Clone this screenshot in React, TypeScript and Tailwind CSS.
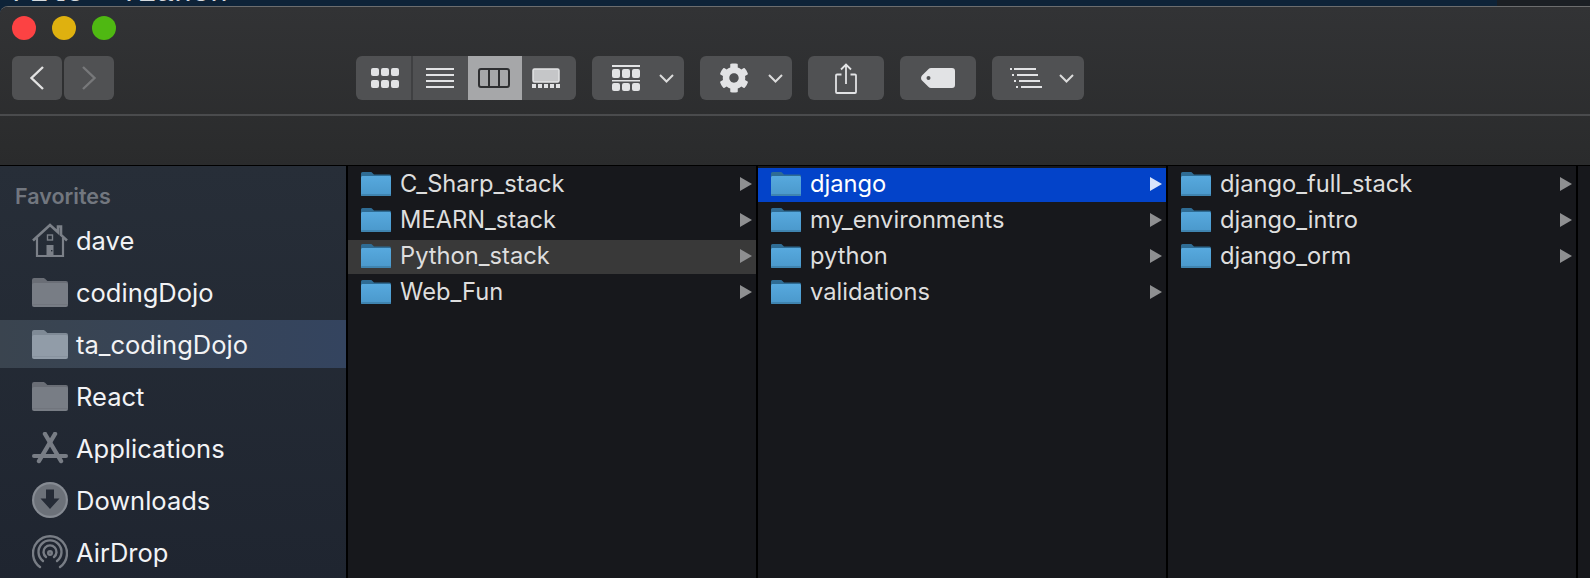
import React from "react";
import { FaCog } from "react-icons/fa";

const font = { fontFamily: "Inter, 'Noto Sans', sans-serif" };

function BlueFolder({ id }: { id: string }) {
  return (
    <svg width="30" height="24" viewBox="0 0 30 24" className="shrink-0">
      <defs>
        <linearGradient id={id} x1="0" y1="0" x2="0" y2="1">
          <stop offset="0" stopColor="#57a9de" />
          <stop offset="1" stopColor="#4a98cb" />
        </linearGradient>
      </defs>
      <path d="M1.5 0H9.5C10.5 0 11 .5 11.7 1.2L13 2.5H28.5A1.5 1.5 0 0 1 30 4V8H0V1.5A1.5 1.5 0 0 1 1.5 0Z" fill="#2f6c94" />
      <path d="M0 5.5C0 4.7.7 4 1.5 4H28.5C29.3 4 30 4.7 30 5.5V22.5A1.5 1.5 0 0 1 28.5 24H1.5A1.5 1.5 0 0 1 0 22.5Z" fill={`url(#${id})`} />
      <rect x="0" y="22" width="30" height="2" rx="1" fill="#3f84b0" />
    </svg>
  );
}

function GrayFolder({ color, dark }: { color: string; dark: string }) {
  return (
    <svg width="36" height="29" viewBox="0 0 36 29">
      <path d="M2 0H11C12.2 0 13 .6 13.8 1.4L15.4 3H34A2 2 0 0 1 36 5V10H0V2A2 2 0 0 1 2 0Z" fill={dark} />
      <path d="M0 7C0 5.9.9 5 2 5H34C35.1 5 36 5.9 36 7V27A2 2 0 0 1 34 29H2A2 2 0 0 1 0 27Z" fill={color} />
      <rect y="26" width="36" height="1" fill={dark} opacity="0.5" />
    </svg>
  );
}

function House() {
  return (
    <svg width="36" height="34" viewBox="0 0 36 34" fill="none">
      <path d="M1 17.5L18 2L26 9.3V3.5H29V12L35 17.5" stroke="#7b8088" strokeWidth="2.6" />
      <path d="M5 15V33H31V15" stroke="#7b8088" strokeWidth="2.2" />
      <rect x="15.5" y="12" width="5" height="5" stroke="#7b8088" strokeWidth="1.4" />
      <rect x="14.5" y="22" width="7" height="11" fill="#7b8088" />
      <rect x="19" y="27" width="1.4" height="1.4" fill="#262d38" />
    </svg>
  );
}

function AppsIcon() {
  return (
    <svg width="36" height="32" viewBox="0 0 36 32" fill="none" stroke="#787d85" strokeLinecap="round">
      <path d="M13 2L29 29" strokeWidth="4.4" />
      <path d="M23 2L7 29" strokeWidth="4.4" />
      <path d="M2 24H34" strokeWidth="4" />
    </svg>
  );
}

function DownloadIcon() {
  return (
    <svg width="36" height="36" viewBox="0 0 36 36">
      <circle cx="18" cy="18" r="18" fill="#868b93" />
      <circle cx="18" cy="18" r="15.8" fill="#6c7179" />
      <path d="M14 7.5H22V16.5H27.5L18 27L8.5 16.5H14Z" fill="#252b36" />
    </svg>
  );
}

function AirDropIcon() {
  return (
    <svg width="36" height="34" viewBox="0 0 36 34" fill="none" stroke="#787d85" strokeWidth="2.4" strokeLinecap="round">
      <path d="M8 32A17 17 0 1 1 28 32" />
      <path d="M11 26A11.5 11.5 0 1 1 25 26" />
      <path d="M14 22A6.5 6.5 0 1 1 22 22" />
      <circle cx="18" cy="18" r="1.8" />
    </svg>
  );
}

function Arrow({ selected }: { selected?: boolean }) {
  return (
    <svg width="12" height="14" viewBox="0 0 12 14" className="shrink-0">
      <path d="M0 0L12 7L0 14Z" fill={selected ? "#d9e4fb" : "#8e8f91"} />
    </svg>
  );
}

function Row({ label, id, selected, active }: { label: string; id: string; selected?: boolean; active?: boolean }) {
  const bg = selected ? "bg-[#0343c9] text-white" : active ? "bg-[#393939] text-[#dedede]" : "text-[#dedede]";
  return (
    <div className={`flex h-[34px] items-center pb-[2px] pl-[13px] pr-1 ${bg}`}>
      <BlueFolder id={id} />
      <span className="ml-[9px] flex-1 text-[23.7px] leading-none">{label}</span>
      <Arrow selected={selected} />
    </div>
  );
}

function Column({ children }: { children: React.ReactNode }) {
  return <div className="flex w-[408px] shrink-0 flex-col gap-[2px] bg-[#17181c] pt-[2px]">{children}</div>;
}

function SideRow({ icon, label, selected }: { icon: React.ReactNode; label: string; selected?: boolean }) {
  return (
    <div className={`flex h-12 items-center pl-8 ${selected ? "bg-gradient-to-r from-[#3a444f] to-[#34445f]" : ""}`}>
      <div className="flex w-9 shrink-0 justify-center">{icon}</div>
      <span className="ml-2 pt-[1px] text-[25.5px] leading-none text-[#f2f3f5]">{label}</span>
    </div>
  );
}

function Chevron() {
  return (
    <svg width="15" height="9" viewBox="0 0 15 9" fill="none" className="-ml-px">
      <path d="M1 1L7.5 7.5L14 1" stroke="#dcdcdc" strokeWidth="2" />
    </svg>
  );
}

const btn = "flex h-11 items-center rounded-md bg-[#505153]";

export default function App() {
  return (
    <div className="flex h-[578px] w-[1590px] flex-col overflow-hidden bg-[#0e2338]" style={font}>
      <div className="relative flex h-[6px] shrink-0 justify-between overflow-hidden">
        <div className="-mt-[24px] pl-3 text-[30px] leading-[34px] whitespace-pre text-[#d5dade]" style={{ fontFamily: "'Liberation Mono', monospace" }}>
          {"File 'Tianon==> >"}
        </div>
        <div className="w-[93px] bg-[#1b1f24]" />
      </div>
      <div className="flex flex-1 flex-col overflow-hidden rounded-tl-lg border-t border-[#6c6d6e] bg-[#17181c]">
        <div className="flex h-[158px] shrink-0 flex-col bg-gradient-to-b from-[#323335] to-[#2a2b2c]">
          <div className="flex gap-4 pt-[9px] pl-3">
            <div className="h-6 w-6 rounded-full bg-[#fc4243]" />
            <div className="h-6 w-6 rounded-full bg-[#dfb10f]" />
            <div className="h-6 w-6 rounded-full bg-[#4fb812]" />
          </div>
          <div className="mt-4 flex pl-3">
            <div className="flex gap-[2px]">
              <div className={`${btn} w-[50px] justify-center`}>
                <svg width="16" height="26" viewBox="0 0 16 26" fill="none"><path d="M14 2L2.5 13L14 24" stroke="#e2e2e2" strokeWidth="2.4" /></svg>
              </div>
              <div className={`${btn} w-[50px] justify-center`}>
                <svg width="16" height="26" viewBox="0 0 16 26" fill="none"><path d="M2 2L13.5 13L2 24" stroke="#77787a" strokeWidth="2.4" /></svg>
              </div>
            </div>
            <div className="ml-[242px] flex h-11 w-[220px] overflow-hidden rounded-md bg-[#505153]">
              <div className="flex w-[57px] items-center justify-center border-r-2 border-[#3f4042] pl-[3px]">
                <svg width="28" height="20" viewBox="0 0 28 20" fill="#e2e3e5">
                  <rect x="0" y="0" width="8" height="8" rx="2" /><rect x="10" y="0" width="8" height="8" rx="2" /><rect x="20" y="0" width="8" height="8" rx="2" />
                  <rect x="0" y="12" width="8" height="8" rx="2" /><rect x="10" y="12" width="8" height="8" rx="2" /><rect x="20" y="12" width="8" height="8" rx="2" />
                </svg>
              </div>
              <div className="flex w-[55px] items-center justify-center pr-[2px]">
                <svg width="28" height="20" viewBox="0 0 28 20" fill="#e2e3e5">
                  <rect y="0" width="28" height="2" /><rect y="6" width="28" height="2" /><rect y="12" width="28" height="2" /><rect y="18" width="28" height="2" />
                </svg>
              </div>
              <div className="flex w-[54px] items-center justify-center bg-[#a6a7a9] pr-[2px]">
                <svg width="32" height="20" viewBox="0 0 32 20" fill="none" stroke="#2e2f31" strokeWidth="2">
                  <rect x="1" y="1" width="30" height="18" rx="2" /><path d="M11 1V19M21 1V19" />
                </svg>
              </div>
              <div className="flex w-[54px] items-center justify-center pr-[6px]">
                <svg width="28" height="20" viewBox="0 0 28 20">
                  <rect x="1" y="1" width="26" height="13" rx="1.5" fill="#c5c6c8" stroke="#e2e3e5" strokeWidth="1.5" />
                  <g fill="#e2e3e5"><rect y="16" width="4" height="4" /><rect x="6" y="16" width="4" height="4" /><rect x="12" y="16" width="4" height="4" /><rect x="18" y="16" width="4" height="4" /><rect x="24" y="16" width="4" height="4" /></g>
                </svg>
              </div>
            </div>
            <div className={`${btn} ml-4 w-[92px] gap-5 pl-5`}>
              <svg width="28" height="26" viewBox="0 0 28 26" fill="#e2e3e5">
                <rect width="28" height="2" />
                <rect y="4" width="8" height="9" rx="2" /><rect x="10" y="4" width="8" height="9" rx="2" /><rect x="20" y="4" width="8" height="9" rx="2" />
                <rect y="15" width="28" height="1.5" />
                <rect y="18" width="8" height="8" rx="2" /><rect x="10" y="18" width="8" height="8" rx="2" /><rect x="20" y="18" width="8" height="8" rx="2" />
              </svg>
              <Chevron />
            </div>
            <div className={`${btn} ml-4 w-[92px] gap-5 pl-[19px]`}>
              <FaCog size={30} color="#e2e3e5" />
              <Chevron />
            </div>
            <div className={`${btn} ml-4 w-[76px] justify-center`}>
              <svg width="22" height="31" viewBox="0 0 22 31" fill="none" stroke="#e2e3e5" strokeWidth="1.8">
                <path d="M6.5 11.5H2A1 1 0 0 0 1 12.5V29A1 1 0 0 0 2 30H20A1 1 0 0 0 21 29V12.5A1 1 0 0 0 20 11.5H15.5" />
                <path d="M11 21V1.5M6 6.5L11 1.5L16 6.5" />
              </svg>
            </div>
            <div className={`${btn} ml-4 w-[76px] justify-center pr-[1px]`}>
              <svg width="34" height="20" viewBox="0 0 34 20">
                <path fillRule="evenodd" d="M10 0H31A3 3 0 0 1 34 3V17A3 3 0 0 1 31 20H10C9 20 8.3 19.6 7.6 19L1 12.6C-.3 11.2-.3 8.8 1 7.4L7.6 1C8.3.4 9 0 10 0ZM7.5 8A2 2 0 1 0 7.5 12A2 2 0 1 0 7.5 8Z" fill="#e2e3e5" />
              </svg>
            </div>
            <div className={`${btn} ml-4 w-[92px] gap-[18px] pl-[18px]`}>
              <svg width="32" height="20" viewBox="0 0 32 20" fill="#e2e3e5">
                <rect y="0" width="2" height="2" /><rect x="4" y="0" width="22" height="2" />
                <rect x="2" y="6" width="2" height="2" /><rect x="7" y="6" width="21" height="2" />
                <rect x="4" y="12" width="2" height="2" /><rect x="9" y="12" width="21" height="2" />
                <rect x="6" y="18" width="2" height="2" /><rect x="11" y="18" width="21" height="2" />
              </svg>
              <Chevron />
            </div>
          </div>
          <div className="mt-[14px] h-[2px] bg-[#4a4b4d]" />
        </div>
        <div className="flex flex-1 gap-[2px] border-t border-black bg-black">
          <div className="flex w-[346px] shrink-0 flex-col gap-1 bg-gradient-to-b from-[#272e38] to-[#1f2530]">
            <div className="flex h-[46px] items-end pb-[5px] pl-[15px] text-[21.5px] leading-none font-semibold text-[#72777f]">Favorites</div>
            <SideRow icon={<House />} label="dave" />
            <SideRow icon={<GrayFolder color="#787d85" dark="#6a6e76" />} label="codingDojo" />
            <SideRow icon={<GrayFolder color="#919ca8" dark="#7f8a96" />} label="ta_codingDojo" selected />
            <SideRow icon={<GrayFolder color="#787d85" dark="#6a6e76" />} label="React" />
            <SideRow icon={<AppsIcon />} label="Applications" />
            <SideRow icon={<DownloadIcon />} label="Downloads" />
            <SideRow icon={<AirDropIcon />} label="AirDrop" />
          </div>
          <Column>
            <Row id="a1" label="C_Sharp_stack" />
            <Row id="a2" label="MEARN_stack" />
            <Row id="a3" label="Python_stack" active />
            <Row id="a4" label="Web_Fun" />
          </Column>
          <Column>
            <Row id="b1" label="django" selected />
            <Row id="b2" label="my_environments" />
            <Row id="b3" label="python" />
            <Row id="b4" label="validations" />
          </Column>
          <Column>
            <Row id="c1" label="django_full_stack" />
            <Row id="c2" label="django_intro" />
            <Row id="c3" label="django_orm" />
          </Column>
          <div className="flex-1 bg-[#17181c]" />
        </div>
      </div>
    </div>
  );
}
